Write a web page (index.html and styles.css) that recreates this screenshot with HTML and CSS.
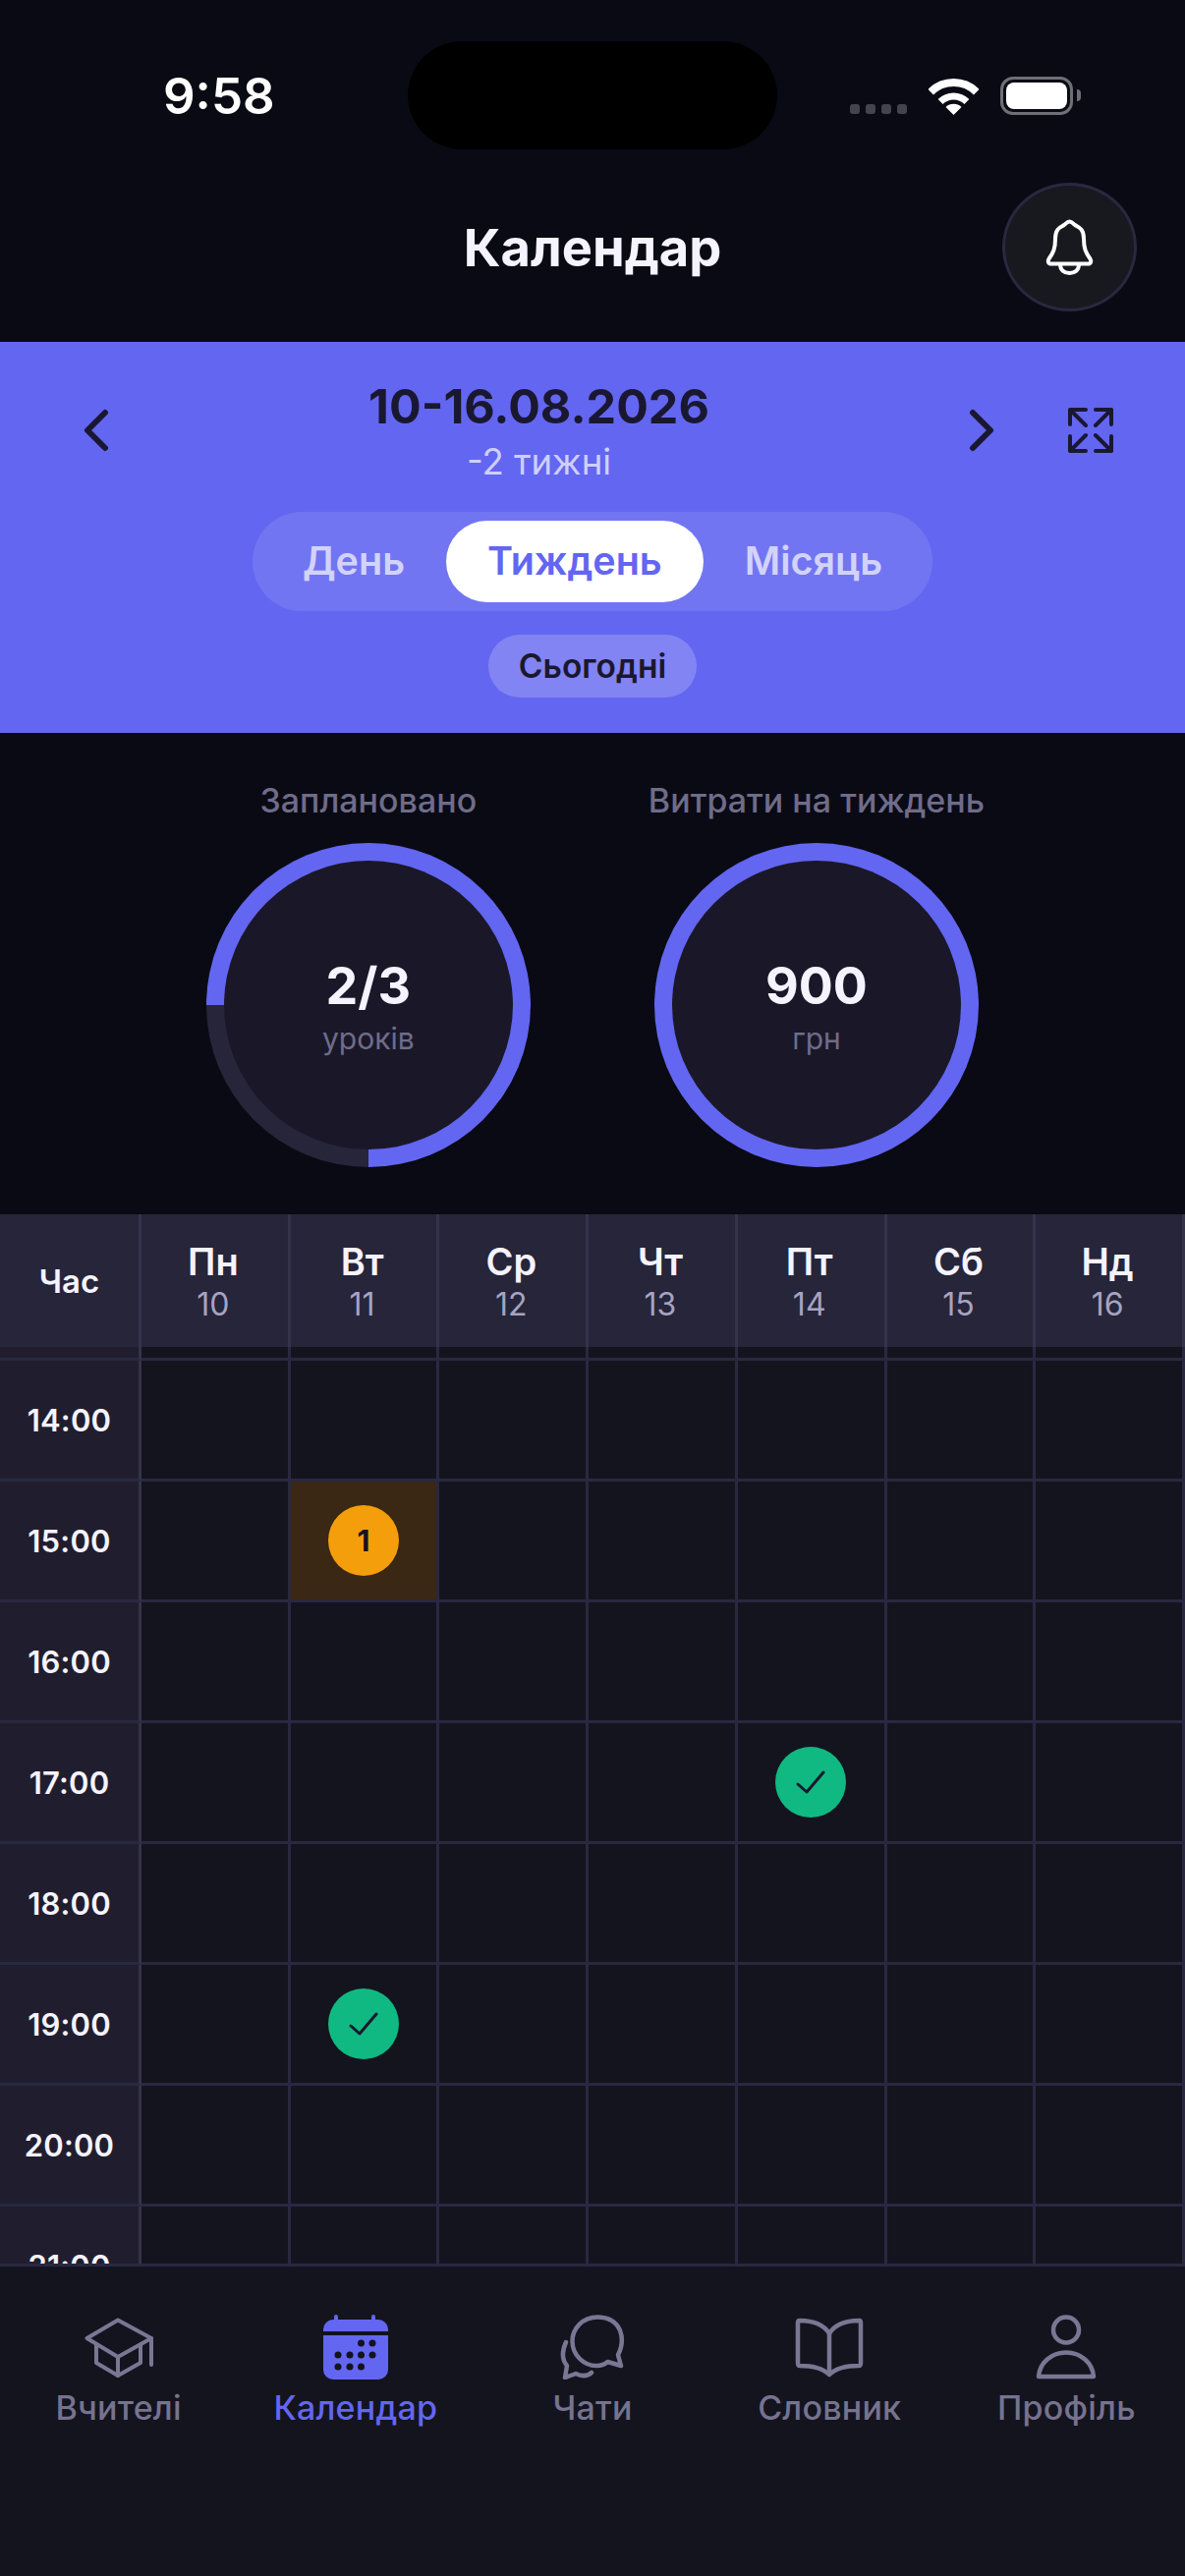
FILE: index.html
```html
<!DOCTYPE html>
<html lang="uk">
<head>
    <meta charset="UTF-8">
    <meta name="viewport" content="width=device-width, initial-scale=1.0">
    <title>Календар</title>
    <link rel="stylesheet" href="styles.css">
</head>
<body>
<div class="screen">

    <!-- Status bar -->
    <div class="status-bar">
        <div class="status-time">9:58</div>
        <div class="island"></div>
        <div class="status-icons">
            <div class="signal"><span></span><span></span><span></span><span></span></div>
            <svg class="wifi" width="51" height="37" viewBox="0 0 51 37" fill="none" stroke="#fff">
                <path d="M2.2 13.7a33 33 0 0 1 46.6 0" stroke-width="8"/>
                <path d="M12.1 23.6a19 19 0 0 1 26.8 0" stroke-width="7"/>
                <path d="M25.5 37l-8-8a11.3 11.3 0 0 1 16 0z" fill="#fff" stroke="none"/>
            </svg>
            <div class="battery"><div class="battery-fill"></div></div>
            <div class="battery-cap"></div>
        </div>
    </div>

    <!-- Title -->
    <header class="top-header">
        <div></div>
        <h1 class="page-title">Календар</h1>
        <div class="bell-wrap">
            <button class="bell-btn">
                <svg width="49" height="57" viewBox="0 0 49 57" fill="none" stroke="#fff" stroke-width="4" stroke-linejoin="round" stroke-linecap="round">
                    <path d="M24.5 2.5C27 2.5 28 4.5 30 6c3 2 9 3 9 14 0 10 2 14 6.5 20.5C47 43 46 45.5 43.5 45.5H5.5C3 45.5 2 43 3.5 40.5 8 34 10 30 10 20 10 9 16 8 19 6c2-1.5 3-3.5 5.5-3.5z"/>
                    <path d="M15 46c0 6 4 9 9.5 9s9.5-3 9.5-9"/>
                </svg>
            </button>
        </div>
    </header>

    <!-- Period switcher -->
    <section class="period">
        <div class="period-nav">
            <svg width="26" height="44" viewBox="0 0 26 44" fill="none" stroke="#1a1830" stroke-width="6" stroke-linecap="round" stroke-linejoin="round"><path d="M22 4L4 22l18 18"/></svg>
            <div class="period-center">
                <div class="period-date">10-16.08.2026</div>
                <div class="period-offset">-2 тижні</div>
            </div>
            <svg width="26" height="44" viewBox="0 0 26 44" fill="none" stroke="#1a1830" stroke-width="6" stroke-linecap="round" stroke-linejoin="round"><path d="M4 4l18 18L4 40"/></svg>
            <svg class="expand" width="46" height="46" viewBox="0 0 46 46" fill="none" stroke="#1a1830" stroke-width="4" stroke-linecap="round" stroke-linejoin="round">
                <path d="M2 17V2h16M2 2l16 16"/>
                <path d="M44 17V2H28M44 2L28 18"/>
                <path d="M2 29v15h16M2 44l16-16"/>
                <path d="M44 29v15H28M44 44L28 28"/>
            </svg>
        </div>
        <div class="tabs">
            <div class="tab">День</div>
            <div class="tab tab-active">Тиждень</div>
            <div class="tab">Місяць</div>
        </div>
        <div class="today-btn">Сьогодні</div>
    </section>

    <!-- Stats rings -->
    <section class="stats">
        <div class="stat">
            <div class="stat-label">Заплановано</div>
            <div class="ring ring-partial">
                <div class="ring-inner">
                    <div class="ring-value">2/3</div>
                    <div class="ring-unit">уроків</div>
                </div>
            </div>
        </div>
        <div class="stat">
            <div class="stat-label">Витрати на тиждень</div>
            <div class="ring">
                <div class="ring-inner">
                    <div class="ring-value">900</div>
                    <div class="ring-unit">грн</div>
                </div>
            </div>
        </div>
    </section>

    <!-- Week table -->
    <section class="week">
        <div class="week-head">
            <div class="head-hour">Час</div>
            <div class="head-day"><b>Пн</b><span>10</span></div>
            <div class="head-day"><b>Вт</b><span>11</span></div>
            <div class="head-day"><b>Ср</b><span>12</span></div>
            <div class="head-day"><b>Чт</b><span>13</span></div>
            <div class="head-day"><b>Пт</b><span>14</span></div>
            <div class="head-day"><b>Сб</b><span>15</span></div>
            <div class="head-day"><b>Нд</b><span>16</span></div>
        </div>
        <div class="week-body">
            <div class="row row-cut">
                <div class="hour"></div>
                <div class="cell"></div><div class="cell"></div><div class="cell"></div><div class="cell"></div><div class="cell"></div><div class="cell"></div><div class="cell"></div>
            </div>
            <div class="row">
                <div class="hour">14:00</div>
                <div class="cell"></div><div class="cell"></div><div class="cell"></div><div class="cell"></div><div class="cell"></div><div class="cell"></div><div class="cell"></div>
            </div>
            <div class="row">
                <div class="hour">15:00</div>
                <div class="cell"></div>
                <div class="cell cell-pending"><div class="mark mark-pending">1</div></div>
                <div class="cell"></div><div class="cell"></div><div class="cell"></div><div class="cell"></div><div class="cell"></div>
            </div>
            <div class="row">
                <div class="hour">16:00</div>
                <div class="cell"></div><div class="cell"></div><div class="cell"></div><div class="cell"></div><div class="cell"></div><div class="cell"></div><div class="cell"></div>
            </div>
            <div class="row">
                <div class="hour">17:00</div>
                <div class="cell"></div><div class="cell"></div><div class="cell"></div><div class="cell"></div>
                <div class="cell">
                    <div class="mark mark-done">
                        <svg width="30" height="26" viewBox="0 0 30 26" fill="none" stroke="#1a1830" stroke-width="3" stroke-linecap="round" stroke-linejoin="round"><path d="M2 15l9 8L28 3"/></svg>
                    </div>
                </div>
                <div class="cell"></div><div class="cell"></div>
            </div>
            <div class="row">
                <div class="hour">18:00</div>
                <div class="cell"></div><div class="cell"></div><div class="cell"></div><div class="cell"></div><div class="cell"></div><div class="cell"></div><div class="cell"></div>
            </div>
            <div class="row">
                <div class="hour">19:00</div>
                <div class="cell"></div>
                <div class="cell">
                    <div class="mark mark-done">
                        <svg width="30" height="26" viewBox="0 0 30 26" fill="none" stroke="#1a1830" stroke-width="3" stroke-linecap="round" stroke-linejoin="round"><path d="M2 15l9 8L28 3"/></svg>
                    </div>
                </div>
                <div class="cell"></div><div class="cell"></div><div class="cell"></div><div class="cell"></div><div class="cell"></div>
            </div>
            <div class="row">
                <div class="hour">20:00</div>
                <div class="cell"></div><div class="cell"></div><div class="cell"></div><div class="cell"></div><div class="cell"></div><div class="cell"></div><div class="cell"></div>
            </div>
            <div class="row">
                <div class="hour">21:00</div>
                <div class="cell"></div><div class="cell"></div><div class="cell"></div><div class="cell"></div><div class="cell"></div><div class="cell"></div><div class="cell"></div>
            </div>
        </div>
    </section>

    <!-- Bottom tabs -->
    <nav class="bottom-nav">
        <div class="nav-item">
            <div class="nav-icon">
                <svg width="70" height="61" viewBox="0 0 70 61" fill="none" stroke="#7a7794" stroke-width="4" stroke-linecap="round" stroke-linejoin="round">
                    <path d="M34 2.5L2.5 21 34 40l34-19z"/>
                    <path d="M12 28v18l22 13 23-13V28"/>
                    <path d="M34 40v19M68 21v27"/>
                </svg>
            </div>
            <div class="nav-label">Вчителі</div>
        </div>
        <div class="nav-item nav-item-active">
            <div class="nav-icon">
                <svg width="66" height="66" viewBox="0 0 66 66" fill="#6366f1">
                    <rect x="11" y="0" width="4" height="8" rx="2"/>
                    <rect x="49" y="0" width="4" height="8" rx="2"/>
                    <path d="M10 5h46a10 10 0 0 1 10 10v2H0v-2A10 10 0 0 1 10 5z"/>
                    <path d="M0 21h66v35a10 10 0 0 1-10 10H10A10 10 0 0 1 0 56z"/>
                    <g fill="#14141f">
                        <circle cx="38.5" cy="29" r="3.5"/><circle cx="50" cy="29" r="3.5"/>
                        <circle cx="15" cy="41" r="3.5"/><circle cx="27" cy="41" r="3.5"/><circle cx="38.5" cy="41" r="3.5"/><circle cx="50" cy="41" r="3.5"/>
                        <circle cx="15" cy="53" r="3.5"/><circle cx="27" cy="53" r="3.5"/><circle cx="38.5" cy="53" r="3.5"/>
                    </g>
                </svg>
            </div>
            <div class="nav-label">Календар</div>
        </div>
        <div class="nav-item">
            <div class="nav-icon">
                <svg width="66" height="66" viewBox="0 0 66 66" fill="none" stroke="#7a7794" stroke-width="4.5" stroke-linecap="round" stroke-linejoin="round">
                    <path d="M59 41c4-8 5-17 2-25C57 7 49 2.5 38 2.5 23 2.5 12.5 14 12.5 27 12.5 41 24 52 37 52c4.5 0 8.5-1.500 11.5-4L62 52z"/>
                    <path d="M6 28C1.5 38 2 46 7 52L5 64l11-4c6 3 12 2.5 16-1"/>
                </svg>
            </div>
            <div class="nav-label">Чати</div>
        </div>
        <div class="nav-item">
            <div class="nav-icon">
                <svg width="70" height="61" viewBox="0 0 70 61" fill="none" stroke="#7a7794" stroke-width="4.5" stroke-linecap="round" stroke-linejoin="round">
                    <path d="M35 16C29 7 19 3 5 3Q3 3 3 5v41q0 3 2 3c14 0 24 3 30 9 6-6 16-9 30-9q2 0 2-3V5q0-2-2-2C51 3 41 7 35 16z"/>
                    <path d="M35 16v42"/>
                </svg>
            </div>
            <div class="nav-label">Словник</div>
        </div>
        <div class="nav-item">
            <div class="nav-icon">
                <svg width="62" height="66" viewBox="0 0 62 66" fill="none" stroke="#7a7794" stroke-width="4.5" stroke-linecap="round" stroke-linejoin="round">
                    <circle cx="31" cy="15.5" r="13"/>
                    <path d="M3 63c1-14 13-24.5 28-24.5S58 49 59 63z"/>
                </svg>
            </div>
            <div class="nav-label">Профіль</div>
        </div>
    </nav>

</div>
</body>
</html>
```

FILE: styles.css
```css
* {
    box-sizing: border-box;
}
html, body {
    margin: 0;
    padding: 0;
}
body {
    background-color: #0a0a14;
    font-family: Inter, "Noto Sans", sans-serif;
    color: #f5f3ff;
}
.screen {
    width: 1206px;
    height: 2622px;
    overflow: hidden;
    display: flex;
    flex-direction: column;
}

/* status bar */
.status-bar {
    height: 168px;
    display: grid;
    grid-template-columns: 415px 376px 1fr;
    align-items: start;
}
.status-time {
    padding: 68px 0 0 166px;
    font-size: 51px;
    line-height: 60px;
    font-weight: 600;
    color: #fff;
}
.island {
    margin-top: 42px;
    height: 110px;
    border-radius: 55px;
    background-color: #000;
}
.status-icons {
    height: 117px;
    padding-left: 74px;
    display: flex;
    align-items: flex-end;
}
.signal {
    display: flex;
    gap: 6px;
    margin-bottom: 1px;
}
.signal span {
    width: 10px;
    height: 10px;
    border-radius: 3px;
    background-color: #44434f;
}
.wifi {
    margin-left: 22px;
}
.battery {
    width: 74px;
    height: 39px;
    margin-left: 22px;
    padding: 3px;
    border: 3px solid #6f6f75;
    border-radius: 13px;
}
.battery-fill {
    height: 100%;
    border-radius: 8px;
    background-color: #fff;
}
.battery-cap {
    width: 4px;
    height: 12px;
    margin: 0 0 14px 4px;
    border-radius: 0 6px 6px 0;
    background-color: #6f6f75;
}

/* title */
.top-header {
    height: 180px;
    display: grid;
    grid-template-columns: 1fr auto 1fr;
    padding-top: 18px;
}
.page-title {
    margin: 0;
    height: 132px;
    font-size: 52.5px;
    line-height: 132px;
    font-weight: 700;
    color: #f5f3ff;
}
.bell-wrap {
    display: flex;
    justify-content: flex-end;
    padding-right: 49px;
}
.bell-btn {
    width: 137px;
    height: 131px;
    border-radius: 50%;
    border: 3px solid #2a2840;
    background-color: #18181f;
    padding: 0;
    display: flex;
    align-items: center;
    justify-content: center;
}

/* period switcher */
.period {
    height: 398px;
    background-color: #6366f1;
    display: flex;
    flex-direction: column;
    align-items: center;
}
.period-nav {
    width: 100%;
    height: 173px;
    padding: 6px 73px 0 85px;
    display: flex;
    align-items: center;
}
.period-center {
    flex: 1;
    text-align: center;
}
.period-date {
    font-size: 48.5px;
    line-height: 58px;
    font-weight: 700;
    color: #1a1830;
}
.period-offset {
    margin-top: 6px;
    font-size: 36.5px;
    line-height: 42px;
    color: rgba(255, 255, 255, 0.7);
}
.expand {
    margin-left: 75px;
}
.tabs {
    height: 101px;
    padding: 9px;
    display: flex;
    border-radius: 51px;
    background-color: rgba(255, 255, 255, 0.1);
}
.tab {
    padding: 0 42px;
    font-size: 39.5px;
    line-height: 83px;
    font-weight: 600;
    color: rgba(255, 255, 255, 0.7);
    border-radius: 42px;
}
.tab-active {
    background-color: #fff;
    color: #6366f1;
}
.today-btn {
    margin-top: 24px;
    height: 64px;
    padding: 0 31px;
    border-radius: 32px;
    background-color: rgba(255, 255, 255, 0.2);
    font-size: 33.5px;
    line-height: 64px;
    font-weight: 600;
    color: #1a1830;
}

/* stats rings */
.stats {
    height: 490px;
    padding: 50px 0 0 6px;
    display: flex;
    justify-content: center;
    gap: 120px;
}
.stat {
    display: flex;
    flex-direction: column;
    align-items: center;
    gap: 24px;
}
.stat-label {
    font-size: 34px;
    line-height: 38px;
    font-weight: 500;
    color: #6f6c8a;
}
.ring {
    width: 330px;
    height: 330px;
    padding: 18px;
    border-radius: 50%;
    background-color: #6366f1;
}
.ring-partial {
    background: conic-gradient(#6366f1 0deg 180deg, #26253a 180deg 270deg, #6366f1 270deg 360deg);
}
.ring-inner {
    height: 100%;
    border-radius: 50%;
    background-color: #1a1828;
    display: flex;
    flex-direction: column;
    align-items: center;
    justify-content: center;
}
.ring-value {
    margin-top: 2px;
    font-size: 52px;
    line-height: 62px;
    font-weight: 700;
    color: #f5f3ff;
}
.ring-unit {
    margin-top: 4px;
    font-size: 30px;
    line-height: 36px;
    color: #6f6c8a;
}

/* week table */
.week {
    height: 1068px;
    display: flex;
    flex-direction: column;
}
.week-head, .row {
    display: grid;
    grid-template-columns: 144px repeat(7, 1fr);
}
.week-head {
    height: 135px;
    background-color: #26253a;
}
.head-hour, .head-day {
    border-right: 3px solid #353349;
    display: flex;
    flex-direction: column;
    align-items: center;
    justify-content: center;
}
.head-day {
    padding: 2px 3px 0 0;
}
.head-hour {
    font-size: 33px;
    font-weight: 600;
    color: #f5f3ff;
}
.head-day b {
    font-size: 38px;
    line-height: 47px;
    font-weight: 600;
    color: #f5f3ff;
}
.head-day span {
    font-size: 32px;
    line-height: 40px;
    color: #a6a3c2;
}
.week-body {
    flex: 1;
    overflow: hidden;
}
.row {
    height: 123px;
}
.row-cut {
    height: 14px;
}
.hour {
    display: flex;
    align-items: center;
    justify-content: center;
    background-color: #201e2e;
    border-right: 3px solid #353349;
    border-bottom: 3px solid #2a2840;
    font-size: 31px;
    letter-spacing: 0.2px;
    font-weight: 600;
    color: #f5f3ff;
}
.cell {
    display: flex;
    align-items: center;
    justify-content: center;
    background-color: #14141f;
    border-right: 3px solid #2a2840;
    border-bottom: 3px solid #2a2840;
}
.cell-pending {
    background-color: #3a2714;
}
.mark {
    width: 72px;
    height: 72px;
    border-radius: 50%;
    display: flex;
    align-items: center;
    justify-content: center;
}
.mark-pending {
    background-color: #f59e0b;
    font-size: 30px;
    font-weight: 700;
    color: #14141f;
}
.mark-done {
    background-color: #10b981;
}

/* bottom tabs */
.bottom-nav {
    flex: 1;
    padding-top: 48px;
    display: grid;
    grid-template-columns: repeat(5, 1fr);
    align-content: start;
    background-color: #14141f;
    border-top: 3px solid #2a2840;
}
.nav-item {
    display: flex;
    flex-direction: column;
    align-items: center;
    gap: 9px;
}
.nav-icon {
    height: 68px;
    display: flex;
    align-items: center;
    justify-content: center;
}
.nav-label {
    font-size: 34px;
    line-height: 38px;
    letter-spacing: 0.2px;
    font-weight: 500;
    color: #76738f;
}
.nav-item-active .nav-label {
    color: #6366f1;
}
```
